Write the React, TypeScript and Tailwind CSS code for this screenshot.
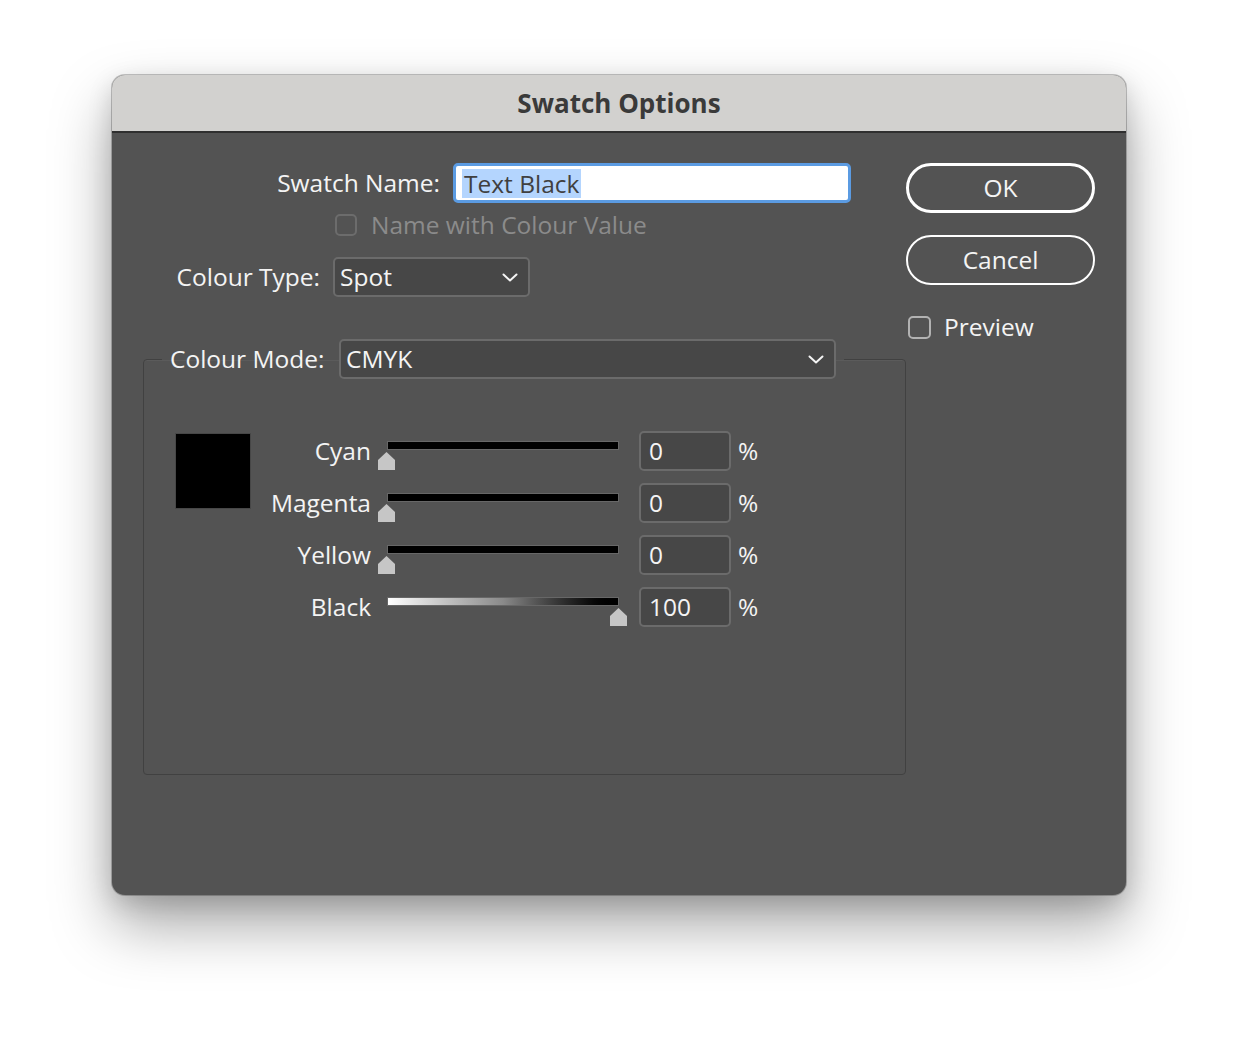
const inks = [
  { name: "Cyan", value: 0 },
  { name: "Magenta", value: 0 },
  { name: "Yellow", value: 0 },
  { name: "Black", value: 100 },
];

function Chevron() {
  return (
    <svg width="16" height="9" viewBox="0 0 16 9" fill="none">
      <path
        d="M1.5 1.5 8 7.5l6.5-6"
        stroke="#f5f5f5"
        strokeWidth="2"
        strokeLinecap="round"
        strokeLinejoin="round"
      />
    </svg>
  );
}

function Thumb() {
  return (
    <svg width="17" height="18" viewBox="0 0 17 18">
      <path d="M0 8 8.5 0 17 8v10H0z" fill="#c6c6c6" />
    </svg>
  );
}

function InkRow({ name, value }: { name: string; value: number }) {
  const track =
    name === "Black"
      ? "bg-gradient-to-r from-white via-[#8a8a8a] to-black"
      : "bg-black";

  return (
    <div className="flex h-10 items-start">
      <div className="w-[120px] text-right leading-10">{name}</div>
      <div className="relative ml-[7px] h-10 w-[250px]">
        <div
          className={`ml-[9px] mt-[10px] h-[9px] w-[232px] border border-[#676767] ${track}`}
        />
        <div
          className="absolute top-[21px]"
          style={{ left: (value / 100) * 232 }}
        >
          <Thumb />
        </div>
      </div>
      <div className="ml-[11px] h-10 w-[92px] rounded-[5px] border-2 border-[#6b6b6b] bg-[#474747] pl-[8px] leading-9">
        {value}
      </div>
      <div className="ml-[7px] leading-10">%</div>
    </div>
  );
}

export default function App() {
  return (
    <div className="h-[1044px] w-full bg-white pl-[112px] pt-[75px] font-['Open_Sans',sans-serif] text-[24.5px] font-medium text-[#f4f4f4]">
      <div className="h-[820px] w-[1014px] overflow-hidden rounded-[13px] bg-[#535353] shadow-[0_0_0_1px_rgba(0,0,0,0.22),0_30px_60px_rgba(0,0,0,0.35),0_8px_24px_rgba(0,0,0,0.15)]">
        <div className="flex h-[58px] items-center justify-center border-b-2 border-[#2f2f2f] bg-[#d2d1cf] text-[26px] font-bold text-[#3a3a3a]">
          Swatch Options
        </div>

        <div className="flex pt-[30px]">
          <div className="w-[794px]">
            <div className="flex h-10 items-center">
              <div className="w-[341px] pr-[13px] text-right">Swatch Name:</div>
              <div className="flex h-10 w-[398px] items-center rounded-[5px] border-[3px] border-[#5b9be2] bg-white pl-[6px] text-[#404040]">
                <span className="bg-[#b4d5fe] px-[2px] leading-[29px]">
                  Text Black
                </span>
              </div>
            </div>

            <div className="mt-[11px] flex h-[22px] items-center pl-[223px] text-[#8b8b8b]">
              <div className="h-[22px] w-[22px] rounded-[5px] border-2 border-[#6c6c6c]" />
              <span className="ml-[14px]">Name with Colour Value</span>
            </div>

            <div className="mt-[21px] flex h-10 items-center">
              <div className="w-[221px] pr-[13px] text-right">Colour Type:</div>
              <div className="flex h-10 w-[197px] items-center justify-between rounded-[5px] border-2 border-[#6b6b6b] bg-[#474747] pl-[5px] pr-[10px]">
                <span>Spot</span>
                <Chevron />
              </div>
            </div>

            <fieldset className="ml-[31px] mt-[42px] h-[436px] w-[763px] rounded-[4px] border border-[#414141] shadow-[inset_0_1px_0_rgba(255,255,255,0.05)]">
              <legend className="ml-[18px] px-[8px]">
                <div className="flex h-10 items-center">
                  <span className="w-[157px]">Colour Mode:</span>
                  <div className="ml-[12px] flex h-10 w-[497px] items-center justify-between rounded-[5px] border-2 border-[#6b6b6b] bg-[#474747] pl-[5px] pr-[10px]">
                    <span>CMYK</span>
                    <Chevron />
                  </div>
                </div>
              </legend>

              <div className="mt-[52px] flex pl-[31px]">
                <div className="mt-[2px] h-[76px] w-[76px] border border-[#474747] bg-black" />
                <div className="flex flex-col gap-3">
                  {inks.map((ink) => (
                    <InkRow key={ink.name} name={ink.name} value={ink.value} />
                  ))}
                </div>
              </div>
            </fieldset>
          </div>

          <div className="w-[189px]">
            <button className="flex h-[50px] w-full items-center justify-center rounded-full border-[3px] border-white">
              OK
            </button>
            <button className="mt-[22px] flex h-[50px] w-full items-center justify-center rounded-full border-2 border-white">
              Cancel
            </button>
            <div className="mt-[24px] flex items-center pl-[2px]">
              <div className="h-[23px] w-[23px] rounded-[5px] border-2 border-[#b2b2b2]" />
              <span className="ml-[13px]">Preview</span>
            </div>
          </div>
        </div>
      </div>
    </div>
  );
}
